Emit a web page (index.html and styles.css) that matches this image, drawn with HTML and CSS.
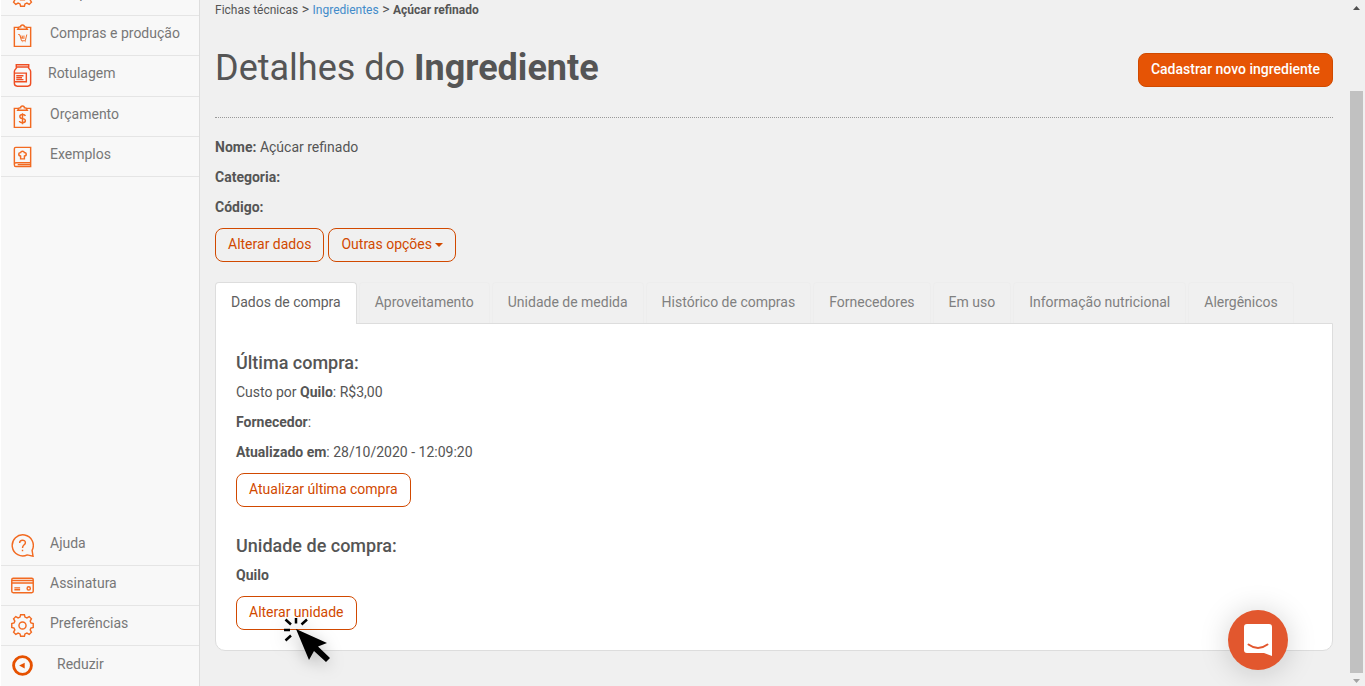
FILE: index.html
```html
<!DOCTYPE html>
<html lang="pt-BR">
<head>
    <meta charset="utf-8">
    <meta name="viewport" content="width=device-width, initial-scale=1">
    <title>Detalhes do Ingrediente</title>
    <link rel="stylesheet" href="styles.css">
</head>
<body>
<div class="app">
    <nav class="sidebar">
        <ul class="menu menu-top">
            <li>
                <a href="#">
                    <svg class="icon" viewBox="0 0 24 24"><path d="M10 .8h4l.6 2.400 2 .8L19 2.700 21.300 5 20 7.400l.8 2 2.400.6v4l-2.400.6-.8 2 1.300 2.400-2.300 2.300-2.400-1.300-2 .8-.6 2.400h-4l-.6-2.400-2-.8L5 21.300 2.700 19 4 16.600l-.8-2L.8 14v-4l2.400-.6.8-2L2.700 5 5 2.700 7.400 4l2-.8z"/><path d="M10 16.500v-3c-3-.5-2-4 0-3.500.5-2 3.500-2 4 0 2-.5 3 3 0 3.500v3z"/></svg>
                    <span>Componentes</span>
                </a>
            </li>
            <li>
                <a href="#">
                    <svg class="icon" viewBox="0 0 24 24"><path d="M8 3.500H3.500v20h17v-20H16M7 5.500h10L15.500 3H14a2 2 0 0 0-4 0H8.500z"/><path class="thin" d="M7.500 11H9l2 6.500h4.500M9.500 12l2 3.500M11.500 12l1 3.500M13.500 12v3.500M16.500 11l-1.500 6M11.500 18.500h.5M15 18.500h.5"/></svg>
                    <span>Compras e produção</span>
                </a>
            </li>
            <li>
                <a href="#" class="tall">
                    <svg class="icon red" viewBox="0 0 24 24"><path d="M5.500.8h13v2.400h-13zM6 3.200c0 2-2.500 2-2.500 4.500v12.500q0 3 3 3h11q3 0 3-3V7.700c0-2.500-2.500-2.500-2.500-4.500M4 9.500h12v9H4M5.500 12.300H13M5.500 14.300h6M5.500 16.300H13"/></svg>
                    <span class="wide">Rotulagem</span>
                </a>
            </li>
            <li>
                <a href="#">
                    <svg class="icon" viewBox="0 0 24 24"><path d="M8 3.500H3.500v20h17v-20H16M7 5.500h10L15.500 3H14a2 2 0 0 0-4 0H8.500z"/><path d="M15 11.500c-.3-1.200-1.500-1.500-3-1.500-3.700 0-3.700 3.700 0 4.200 4 .5 4 4.300 0 4.300-1.700 0-3-.5-3.200-1.800M12 8.500V20"/></svg>
                    <span>Orçamento</span>
                </a>
            </li>
            <li>
                <a href="#">
                    <svg class="icon" viewBox="0 0 24 24"><path d="M3.500 20.500V4q0-1.500 1.500-1.500h15.500v16H5q-1.500 0-1.500 2t1.500 2h15.500v-4M7 20.500h13"/><path d="M10 14.500v-3c-3-.5-2-4 0-3.500.5-2 3.500-2 4 0 2-.5 3 3 0 3.500v3z"/></svg>
                    <span>Exemplos</span>
                </a>
            </li>
        </ul>
        <ul class="menu menu-bottom">
            <li>
                <a href="#">
                    <svg class="icon" viewBox="0 0 24 24"><path d="M22 17A11 11 0 1 0 17 21.800l6 1.400z"/><path d="M9 9.500c0-4 6-4 6-.5 0 2.500-3 2-3 5.500M12 16.500V18"/></svg>
                    <span>Ajuda</span>
                </a>
            </li>
            <li>
                <a href="#">
                    <svg class="icon" viewBox="0 0 24 24"><rect x=".8" y="4.500" width="22.400" height="15" rx="1.500"/><path d="M1 6.800h22M1 9.300h22M3.500 14.500h6M3.500 16.500h6"/><circle cx="18.500" cy="15" r="1.700"/></svg>
                    <span>Assinatura</span>
                </a>
            </li>
            <li>
                <a href="#">
                    <svg class="icon" viewBox="0 0 24 24"><path d="M10 .8h4l.6 2.400 2 .8L19 2.700 21.300 5 20 7.400l.8 2 2.400.6v4l-2.400.6-.8 2 1.300 2.400-2.300 2.300-2.400-1.300-2 .8-.6 2.400h-4l-.6-2.400-2-.8L5 21.300 2.700 19 4 16.600l-.8-2L.8 14v-4l2.400-.6.8-2L2.700 5 5 2.700 7.400 4l2-.8z"/><circle cx="12" cy="12" r="3.700"/></svg>
                    <span>Preferências</span>
                </a>
            </li>
            <li>
                <a href="#">
                    <svg class="icon bold" viewBox="0 0 24 24"><circle cx="12" cy="12" r="9.300"/><path class="solid" d="M8.500 12 14.300 9v6z"/></svg>
                    <span class="indent">Reduzir</span>
                </a>
            </li>
        </ul>
    </nav>

    <main class="content">
        <div class="breadcrumb"><span>Fichas técnicas</span> &gt; <a href="#">Ingredientes</a> &gt; <b>Açúcar refinado</b></div>
        <header class="page-header">
            <h1>Detalhes do <b>Ingrediente</b></h1>
            <button type="button" class="btn btn-primary">Cadastrar novo ingrediente</button>
        </header>

        <p><b>Nome:</b> Açúcar refinado</p>
        <p><b>Categoria:</b></p>
        <p><b>Código:</b></p>
        <div class="actions">
            <button type="button" class="btn">Alterar dados</button>
            <button type="button" class="btn">Outras opções <span class="caret"></span></button>
        </div>

        <div class="tabs" role="tablist">
            <a href="#" role="tab" class="active" aria-selected="true">Dados de compra</a>
            <a href="#" role="tab">Aproveitamento</a>
            <a href="#" role="tab">Unidade de medida</a>
            <a href="#" role="tab">Histórico de compras</a>
            <a href="#" role="tab">Fornecedores</a>
            <a href="#" role="tab">Em uso</a>
            <a href="#" role="tab">Informação nutricional</a>
            <a href="#" role="tab">Alergênicos</a>
        </div>
        <section class="panel">
            <h4>Última compra:</h4>
            <p>Custo por <b>Quilo</b>: R$3,00</p>
            <p><b>Fornecedor</b>:</p>
            <p><b>Atualizado em</b>: 28/10/2020 - 12:09:20</p>
            <button type="button" class="btn">Atualizar última compra</button>
            <h4 class="spaced">Unidade de compra:</h4>
            <p><b>Quilo</b></p>
            <div class="pointed">
                <button type="button" class="btn">Alterar unidade</button>
                <svg class="pointer" viewBox="0 0 50 50"><path d="M13 11 44 25l-9 3.500L47 40l-4 4-12-11-5 9z"/><path class="rays" d="M2.500 1.500 8 6.500M13 0v5.500M24 1.500 18.500 6.500M1 12h6M2.500 22.500l5.500-5"/></svg>
            </div>
        </section>
    </main>

    <div class="scrollbar">
        <svg viewBox="0 0 7 4"><path fill="#505050" d="M0 4h7L3.500 0z"/></svg>
        <div class="thumb"></div>
        <svg viewBox="0 0 7 4"><path fill="#a3a3a3" d="M0 0h7L3.500 4z"/></svg>
    </div>
</div>

<button type="button" class="chat" aria-label="Chat">
    <svg viewBox="0 0 28 32"><path fill="#fff" d="M3 0h22q3 0 3 3v29l-8-3H3q-3 0-3-3V3q0-3 3-3z"/><path class="smile" d="M4.500 20.500q9.500 7 19 0"/></svg>
</button>
</body>
</html>
```
FILE: styles.css
```css
* {
    box-sizing: border-box;
}

body {
    margin: 0;
    background-color: #f0f0f0;
    color: #555555;
    font: 14px/20px Roboto, Arial, sans-serif;
}

a {
    color: #428bca;
    text-decoration: none;
}

p {
    margin: 0 0 10px;
}

.app {
    display: flex;
    height: 100vh;
    overflow: hidden;
}

/* sidebar */
.sidebar {
    display: flex;
    flex: 0 0 200px;
    flex-direction: column;
    justify-content: space-between;
    border-right: 1px solid #dddddd;
    border-left: 1px solid #ffffff;
    background-color: #f8f8f8;
}

.menu {
    margin: 0;
    padding: 0;
    list-style: none;
}

.menu-top {
    margin-top: -24px;
}

.menu a {
    display: flex;
    gap: 16px;
    height: 40px;
    padding: 7px 10px 0;
    border-bottom: 1px solid #e5e5e5;
    color: #777777;
}

.menu a.tall {
    height: 41px;
}

.menu-bottom li:last-child a {
    border-bottom: none;
}

.menu .wide {
    margin-left: -2px;
}

.menu .indent {
    padding: 1px 0 0 7px;
}

.icon {
    flex: none;
    width: 23px;
    height: 23px;
    margin-top: 1px;
    fill: none;
    stroke: #f26a21;
    stroke-width: 1.5;
}

.icon.red {
    stroke: #ef4e23;
}

.icon.bold {
    stroke: #e65100;
    stroke-width: 3;
}

.icon .thin {
    stroke-width: 1;
}

.icon .solid {
    fill: #e65100;
    stroke: none;
}

/* page */
.content {
    flex: 1;
    padding: 0 17px 0 15px;
}

.breadcrumb {
    height: 20px;
    line-height: 18px;
}

.breadcrumb span,
.breadcrumb a,
.breadcrumb b {
    font-size: 12px;
}

.page-header {
    display: flex;
    justify-content: space-between;
    align-items: flex-start;
    height: 98px;
    margin-bottom: 19px;
    padding-top: 33px;
    border-bottom: 1px dotted #999999;
}

h1 {
    margin: -5px 0 0;
    font-size: 36px;
    font-weight: 400;
    line-height: 40px;
}

h4 {
    margin: 0 0 9px;
    font-size: 18px;
    font-weight: 500;
    line-height: 20px;
}

h4.spaced {
    margin-top: 29px;
}

.btn {
    height: 34px;
    margin: 1px 0 0;
    padding: 0 12px 2px;
    border: 1px solid #d14900;
    border-radius: 8px;
    background-color: transparent;
    color: #d14900;
    font: inherit;
    cursor: pointer;
}

.btn-primary {
    margin: 0;
    border-color: #d04a00;
    background-color: #e65405;
    color: #ffffff;
    font-weight: 500;
}

.actions {
    display: flex;
    gap: 4px;
    margin-bottom: 20px;
}

.caret {
    display: inline-block;
    border-top: 4px solid;
    border-right: 4px solid transparent;
    border-left: 4px solid transparent;
    vertical-align: middle;
}

.tabs {
    display: flex;
    gap: 2px;
}

.tabs a {
    padding: 9px 15px 11px;
    border: 1px solid #ededed;
    border-bottom: none;
    border-radius: 4px 4px 0 0;
    color: #808080;
}

.tabs a.active {
    position: relative;
    margin-bottom: -1px;
    border-color: #dddddd;
    background-color: #ffffff;
    color: #606060;
}

.panel {
    padding: 29px 20px 20px;
    border: 1px solid #dddddd;
    border-radius: 0 0 10px 10px;
    background-color: #ffffff;
}

.pointed {
    position: relative;
}

.pointer {
    position: absolute;
    top: 23px;
    left: 47px;
    width: 50px;
    height: 50px;
    filter: drop-shadow(0 4px 8px rgba(0, 0, 0, 0.25));
}

.rays {
    stroke: #000000;
    stroke-width: 2.5;
}

/* scrollbar */
.scrollbar {
    display: flex;
    flex: 0 0 15px;
    flex-direction: column;
    align-items: center;
    padding: 6px 2px 3px 0;
}

.scrollbar svg {
    width: 7px;
    height: 4px;
}

.thumb {
    flex: 1;
    width: 13px;
    margin: 81px 0 6px;
    background-color: #c1c1c1;
}

/* chat */
.chat {
    position: fixed;
    right: 77px;
    bottom: 16px;
    display: flex;
    align-items: center;
    justify-content: center;
    width: 60px;
    height: 60px;
    padding: 0;
    border: none;
    border-radius: 50%;
    background-color: #e2572e;
    box-shadow: 0 2px 30px rgba(0, 0, 0, 0.18);
}

.chat svg {
    width: 28px;
    height: 32px;
}

.smile {
    fill: none;
    stroke: #e2572e;
    stroke-width: 2;
    stroke-linecap: round;
}
```
